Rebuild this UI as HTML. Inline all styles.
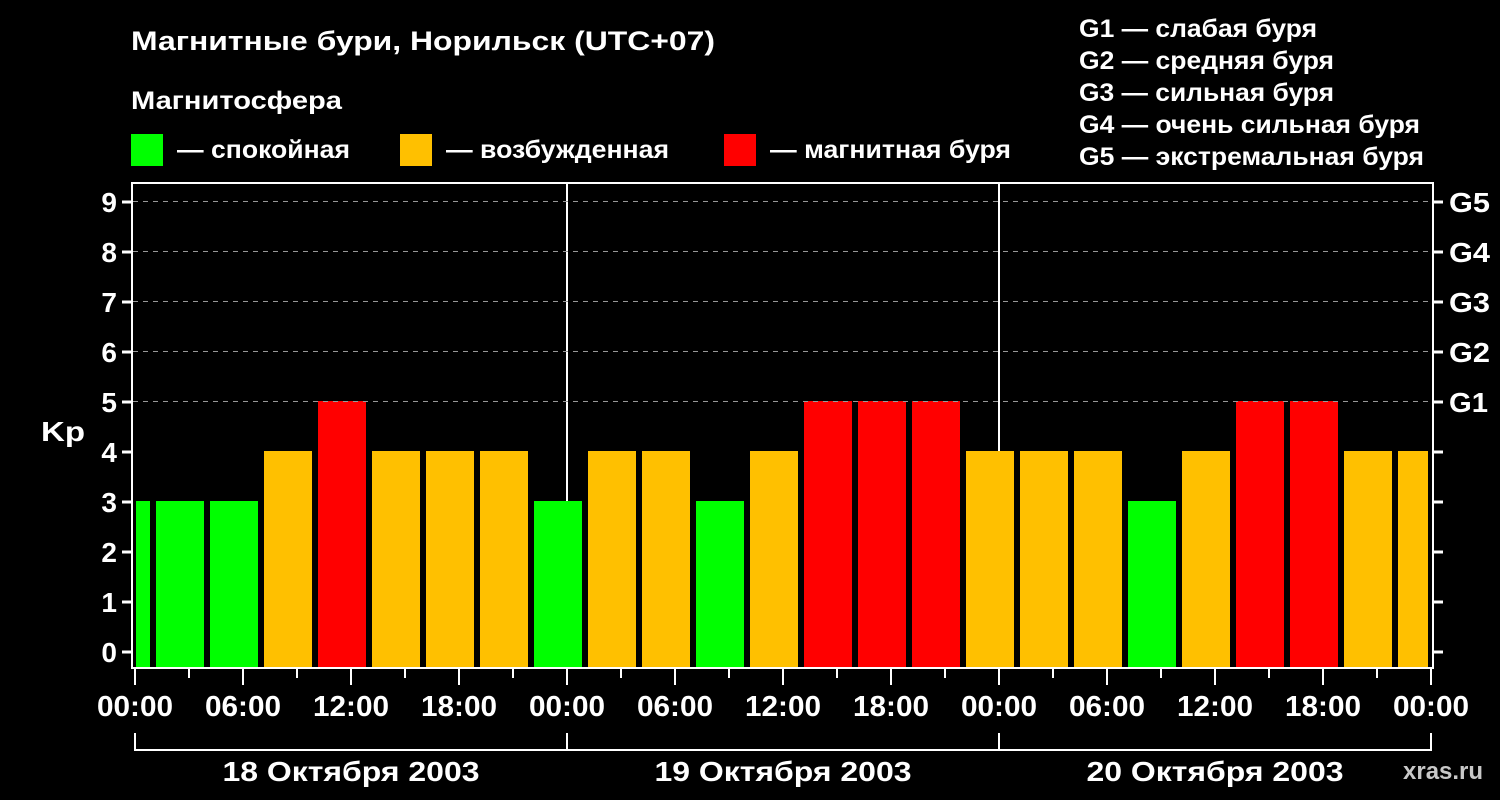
<!DOCTYPE html>
<html><head><meta charset="utf-8"><style>
html,body{margin:0;padding:0;background:#000;width:1500px;height:800px;overflow:hidden}
svg text{font-family:"Liberation Sans",sans-serif;font-weight:bold;fill:#fff}
</style></head><body>
<svg width="1500" height="800" xmlns="http://www.w3.org/2000/svg">
<rect width="1500" height="800" fill="#000"/>
<text x="131" y="50" font-size="27" textLength="584" lengthAdjust="spacingAndGlyphs">Магнитные бури, Норильск (UTC+07)</text>
<text x="131" y="109" font-size="25" textLength="211" lengthAdjust="spacingAndGlyphs">Магнитосфера</text>
<rect x="131" y="134" width="32" height="32" fill="#00ff00"/>
<text x="177" y="158" font-size="25" textLength="173" lengthAdjust="spacingAndGlyphs">— спокойная</text>
<rect x="400" y="134" width="32" height="32" fill="#ffc000"/>
<text x="446" y="158" font-size="25" textLength="223" lengthAdjust="spacingAndGlyphs">— возбужденная</text>
<rect x="724" y="134" width="32" height="32" fill="#ff0000"/>
<text x="770" y="158" font-size="25" textLength="241" lengthAdjust="spacingAndGlyphs">— магнитная буря</text>
<g font-size="25">
<text x="1079" y="37" textLength="238" lengthAdjust="spacingAndGlyphs">G1 — слабая буря</text>
<text x="1079" y="69" textLength="255" lengthAdjust="spacingAndGlyphs">G2 — средняя буря</text>
<text x="1079" y="101" textLength="255" lengthAdjust="spacingAndGlyphs">G3 — сильная буря</text>
<text x="1079" y="133" textLength="341" lengthAdjust="spacingAndGlyphs">G4 — очень сильная буря</text>
<text x="1079" y="165" textLength="345" lengthAdjust="spacingAndGlyphs">G5 — экстремальная буря</text>
</g>
<g stroke="#fff" stroke-width="2">
<line x1="567" y1="183" x2="567" y2="668"/>
<line x1="999" y1="183" x2="999" y2="668"/>
</g>
<g>
<rect x="136" y="501" width="14" height="166" fill="#00ff00"/>
<rect x="156" y="501" width="48" height="166" fill="#00ff00"/>
<rect x="210" y="501" width="48" height="166" fill="#00ff00"/>
<rect x="264" y="451" width="48" height="216" fill="#ffc000"/>
<rect x="318" y="401" width="48" height="266" fill="#ff0000"/>
<rect x="372" y="451" width="48" height="216" fill="#ffc000"/>
<rect x="426" y="451" width="48" height="216" fill="#ffc000"/>
<rect x="480" y="451" width="48" height="216" fill="#ffc000"/>
<rect x="534" y="501" width="48" height="166" fill="#00ff00"/>
<rect x="588" y="451" width="48" height="216" fill="#ffc000"/>
<rect x="642" y="451" width="48" height="216" fill="#ffc000"/>
<rect x="696" y="501" width="48" height="166" fill="#00ff00"/>
<rect x="750" y="451" width="48" height="216" fill="#ffc000"/>
<rect x="804" y="401" width="48" height="266" fill="#ff0000"/>
<rect x="858" y="401" width="48" height="266" fill="#ff0000"/>
<rect x="912" y="401" width="48" height="266" fill="#ff0000"/>
<rect x="966" y="451" width="48" height="216" fill="#ffc000"/>
<rect x="1020" y="451" width="48" height="216" fill="#ffc000"/>
<rect x="1074" y="451" width="48" height="216" fill="#ffc000"/>
<rect x="1128" y="501" width="48" height="166" fill="#00ff00"/>
<rect x="1182" y="451" width="48" height="216" fill="#ffc000"/>
<rect x="1236" y="401" width="48" height="266" fill="#ff0000"/>
<rect x="1290" y="401" width="48" height="266" fill="#ff0000"/>
<rect x="1344" y="451" width="48" height="216" fill="#ffc000"/>
<rect x="1398" y="451" width="30" height="216" fill="#ffc000"/>
</g>
<g stroke="#999" stroke-width="1" stroke-dasharray="5,5">
<line x1="133" y1="201.5" x2="1432" y2="201.5"/>
<line x1="133" y1="251.5" x2="1432" y2="251.5"/>
<line x1="133" y1="301.5" x2="1432" y2="301.5"/>
<line x1="133" y1="351.5" x2="1432" y2="351.5"/>
<line x1="133" y1="401.5" x2="1432" y2="401.5"/>
</g>
<g stroke="#fff" stroke-width="2" fill="none">
<rect x="132" y="183" width="1301" height="485"/>
</g>
<g stroke="#fff" stroke-width="3">
<path d="M122 202H131M122 252H131M122 302H131M122 352H131M122 402H131M122 452H131M122 502H131M122 552H131M122 602H131M122 652H131"/>
<path d="M1434 202H1443M1434 252H1443M1434 302H1443M1434 352H1443M1434 402H1443M1434 452H1443M1434 502H1443M1434 552H1443M1434 602H1443M1434 652H1443"/>
</g>
<g stroke="#fff" stroke-width="2">
<path d="M135 669V685M567 669V685M999 669V685M1431 669V685"/>
<path d="M189 669V678M243 669V685M297 669V678M351 669V685M405 669V678M459 669V685M513 669V678M621 669V678M675 669V685M729 669V678M783 669V685M837 669V678M891 669V685M945 669V678M1053 669V678M1107 669V685M1161 669V678M1215 669V685M1269 669V678M1323 669V685M1377 669V678"/>
<path d="M135 733V750H1431V733M567 733V750M999 733V750" fill="none"/>
</g>
<g font-size="28" text-anchor="end">
<text x="117" y="212">9</text><text x="117" y="262">8</text><text x="117" y="312">7</text><text x="117" y="362">6</text><text x="117" y="412">5</text><text x="117" y="462">4</text><text x="117" y="512">3</text><text x="117" y="562">2</text><text x="117" y="612">1</text><text x="117" y="662">0</text>
</g>
<text x="41" y="441" font-size="28" textLength="44" lengthAdjust="spacingAndGlyphs">Kp</text>
<g font-size="28">
<text x="1449" y="212" textLength="41" lengthAdjust="spacingAndGlyphs">G5</text><text x="1449" y="262" textLength="41" lengthAdjust="spacingAndGlyphs">G4</text><text x="1449" y="312" textLength="41" lengthAdjust="spacingAndGlyphs">G3</text><text x="1449" y="362" textLength="41" lengthAdjust="spacingAndGlyphs">G2</text><text x="1449" y="412" textLength="39" lengthAdjust="spacingAndGlyphs">G1</text>
</g>
<g font-size="29" text-anchor="middle">
<text x="135" y="716" textLength="76" lengthAdjust="spacingAndGlyphs">00:00</text><text x="243" y="716" textLength="76" lengthAdjust="spacingAndGlyphs">06:00</text><text x="351" y="716" textLength="76" lengthAdjust="spacingAndGlyphs">12:00</text><text x="459" y="716" textLength="76" lengthAdjust="spacingAndGlyphs">18:00</text>
<text x="567" y="716" textLength="76" lengthAdjust="spacingAndGlyphs">00:00</text><text x="675" y="716" textLength="76" lengthAdjust="spacingAndGlyphs">06:00</text><text x="783" y="716" textLength="76" lengthAdjust="spacingAndGlyphs">12:00</text><text x="891" y="716" textLength="76" lengthAdjust="spacingAndGlyphs">18:00</text>
<text x="999" y="716" textLength="76" lengthAdjust="spacingAndGlyphs">00:00</text><text x="1107" y="716" textLength="76" lengthAdjust="spacingAndGlyphs">06:00</text><text x="1215" y="716" textLength="76" lengthAdjust="spacingAndGlyphs">12:00</text><text x="1323" y="716" textLength="76" lengthAdjust="spacingAndGlyphs">18:00</text>
<text x="1431" y="716" textLength="76" lengthAdjust="spacingAndGlyphs">00:00</text>
</g>
<g font-size="28" text-anchor="middle">
<text x="351" y="781" textLength="257" lengthAdjust="spacingAndGlyphs">18 Октября 2003</text>
<text x="783" y="781" textLength="257" lengthAdjust="spacingAndGlyphs">19 Октября 2003</text>
<text x="1215" y="781" textLength="257" lengthAdjust="spacingAndGlyphs">20 Октября 2003</text>
</g>
<text x="1403" y="779" font-size="24" style="fill:#c8c8c8">xras.ru</text>
</svg>
</body></html>
